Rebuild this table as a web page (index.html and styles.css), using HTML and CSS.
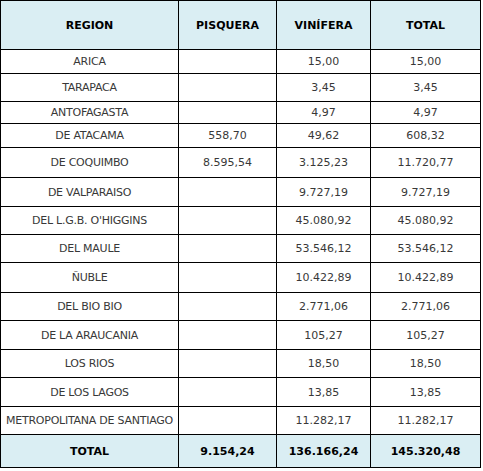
FILE: index.html
```html
<!DOCTYPE html>
<html lang="es">
<head>
<meta charset="utf-8">
<title>Superficie por región</title>
<link rel="stylesheet" href="styles.css">
</head>
<body>
<div class="grid">
  <div class="cell head">REGION</div><div class="cell head">PISQUERA</div><div class="cell head">VINÍFERA</div><div class="cell head">TOTAL</div>
  <div class="cell name">ARICA</div><div class="cell"></div><div class="cell">15,00</div><div class="cell">15,00</div>
  <div class="cell name">TARAPACA</div><div class="cell"></div><div class="cell">3,45</div><div class="cell">3,45</div>
  <div class="cell name">ANTOFAGASTA</div><div class="cell"></div><div class="cell">4,97</div><div class="cell">4,97</div>
  <div class="cell name">DE ATACAMA</div><div class="cell">558,70</div><div class="cell">49,62</div><div class="cell">608,32</div>
  <div class="cell name">DE COQUIMBO</div><div class="cell">8.595,54</div><div class="cell">3.125,23</div><div class="cell">11.720,77</div>
  <div class="cell name">DE VALPARAISO</div><div class="cell"></div><div class="cell">9.727,19</div><div class="cell">9.727,19</div>
  <div class="cell name">DEL L.G.B. O'HIGGINS</div><div class="cell"></div><div class="cell">45.080,92</div><div class="cell">45.080,92</div>
  <div class="cell name">DEL MAULE</div><div class="cell"></div><div class="cell">53.546,12</div><div class="cell">53.546,12</div>
  <div class="cell name">ÑUBLE</div><div class="cell"></div><div class="cell">10.422,89</div><div class="cell">10.422,89</div>
  <div class="cell name">DEL BIO BIO</div><div class="cell"></div><div class="cell">2.771,06</div><div class="cell">2.771,06</div>
  <div class="cell name">DE LA ARAUCANIA</div><div class="cell"></div><div class="cell">105,27</div><div class="cell">105,27</div>
  <div class="cell name">LOS RIOS</div><div class="cell"></div><div class="cell">18,50</div><div class="cell">18,50</div>
  <div class="cell name">DE LOS LAGOS</div><div class="cell"></div><div class="cell">13,85</div><div class="cell">13,85</div>
  <div class="cell name">METROPOLITANA DE SANTIAGO</div><div class="cell"></div><div class="cell">11.282,17</div><div class="cell">11.282,17</div>
  <div class="cell head">TOTAL</div><div class="cell head">9.154,24</div><div class="cell head">136.166,24</div><div class="cell head">145.320,48</div>
</div>
</body>
</html>
```
FILE: styles.css
```css
html, body {
  margin: 0;
  padding: 0;
  background: #ffffff;
}
.grid {
  display: grid;
  width: 481px;
  box-sizing: border-box;
  grid-template-columns: 177px 97px 93px 109px;
  grid-template-rows: 48px 23px 27px 21px 23px 29px 28px 27px 27px 29px 27px 28px 27px 28px 27px 32px;
  gap: 1px;
  padding: 1px;
  background: #000000;
  font-family: "DejaVu Sans", Verdana, sans-serif;
  font-size: 11px;
  color: #383838;
}
.cell {
  background: #ffffff;
  display: flex;
  align-items: center;
  justify-content: center;
  white-space: nowrap;
}
.name {
  letter-spacing: -0.25px;
}
.head {
  background: #daeef3;
  font-weight: bold;
  color: #000000;
}
```
